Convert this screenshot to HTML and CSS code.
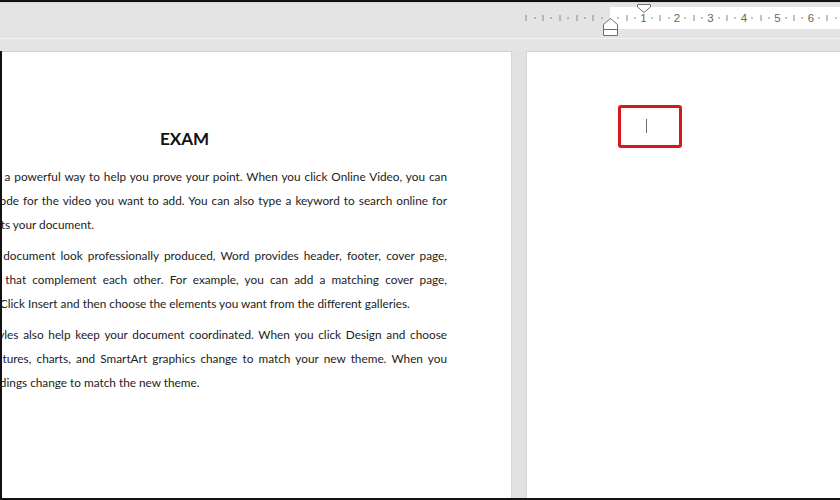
FILE: index.html
```html
<!DOCTYPE html>
<html lang="en">
<head>
  <meta charset="UTF-8">
  <meta name="viewport" content="width=device-width, initial-scale=1.0">
  <title>Document1 - Word</title>
  <link rel="stylesheet" href="styles.css">
</head>
<body>
  <div class="window">
    <!-- ruler strip above the pages -->
    <div class="topbar">
      <svg class="ruler" width="320" height="36" viewBox="520 2 320 36">
        <rect x="610" y="7" width="230" height="22" fill="#fff"/>
        <g id="ticks" fill="#8a8a8a"></g>
        <g class="ruler-num" font-size="11.5" fill="#666" text-anchor="middle">
          <text x="643.5" y="22">1</text>
          <text x="677" y="22">2</text>
          <text x="710.5" y="22">3</text>
          <text x="744" y="22">4</text>
          <text x="777.5" y="22">5</text>
          <text x="811" y="22">6</text>
        </g>
        <!-- first line indent -->
        <path d="M637.5 4.5 H650.5 V7 L644 12.5 L637.5 7 Z" fill="#fff" stroke="#6e6e6e"/>
        <!-- hanging / left indent -->
        <path d="M610.5 18.5 L617.5 24.5 V35.5 H603.5 V24.5 Z" fill="#fff" stroke="#6e6e6e"/>
        <path d="M603.5 29.5 H617.5" stroke="#6e6e6e"/>
      </svg>
      <div class="band"></div>
    </div>

    <div class="workspace">
      <div class="page page-one">
        <div class="text">
          <h1>EXAM</h1>
          <div class="para">
            <span class="ln">n a powerful way to help you prove your point. When you click Online Video, you can</span>
            <span class="ln">code for the video you want to add. You can also type a keyword to search online for</span>
            <span class="ln end">fits your document.</span>
          </div>
          <div class="para">
            <span class="ln">r document look professionally produced, Word provides header, footer, cover page,</span>
            <span class="ln">s that complement each other. For example, you can add a matching cover page,</span>
            <span class="ln end">. Click Insert and then choose the elements you want from the different galleries.</span>
          </div>
          <div class="para">
            <span class="ln">tyles also help keep your document coordinated. When you click Design and choose</span>
            <span class="ln">ictures, charts, and SmartArt graphics change to match your new theme. When you</span>
            <span class="ln end">adings change to match the new theme.</span>
          </div>
        </div>
      </div>
      <div class="page-gap"></div>
      <div class="page page-two">
        <div class="caret-box">
          <div class="caret"></div>
        </div>
      </div>
    </div>
  </div>

  <script>
    // quarter-centimetre marks on the ruler, 0 sits on the left margin
    const ticks = document.getElementById("ticks");
    const cm = 33.45;
    const origin = 610;
    for (let q = -11; q <= 27; q++) {
      if (q === 0) continue;
      if (q > 0 && q % 4 === 0) continue; // numbered
      const x = origin + (q / 4) * cm;
      const r = document.createElementNS("http://www.w3.org/2000/svg", "rect");
      const tall = Math.abs(q) % 2 === 0;
      r.setAttribute("x", (Math.round(x) - 0.5).toString());
      r.setAttribute("width", "1");
      r.setAttribute("y", tall ? "15" : "17");
      r.setAttribute("height", tall ? "6" : "2");
      ticks.appendChild(r);
    }
  </script>
</body>
</html>
```

FILE: styles.css
```css
* {
  box-sizing: border-box;
}

body {
  margin: 0;
  background: #fff;
  font-family: "Lato", "Liberation Sans", sans-serif;
}

.window {
  width: 840px;
  height: 500px;
  border-top: 2px solid #121212;
  border-bottom: 2px solid #121212;
  display: flex;
  flex-direction: column;
  overflow: hidden;
}

/* ruler area */
.topbar {
  height: 49px;
  background: #e4e4e4;
  border-top: 1px solid #d9d9d9;
  flex-shrink: 0;
}

.ruler {
  display: block;
  margin-left: 520px;
  margin-top: -1px;
}

.ruler-num {
  font-family: "Liberation Sans", sans-serif;
}

.band {
  height: 0;
  border-top: 1px solid #f1f1f1;
}

/* pages */
.workspace {
  flex: 1;
  display: flex;
  border-left: 2px solid #111;
  background: #e2e2e2;
}

.page {
  background: #fff;
  border-top: 1px solid #cfcfcf;
  overflow: hidden;
}

.page-one {
  width: 509px;
  padding-top: 75px;
}

.page-gap {
  width: 16px;
  background: #e1e1e1;
  border-left: 1px solid #d6d6d6;
  border-right: 1px solid #d6d6d6;
}

.page-two {
  flex: 1;
  padding-top: 53px;
  padding-left: 91px;
}

.text {
  margin-left: -80px;
  width: 525px;
  color: #222;
  font-size: 11.8px;
}

h1 {
  margin: 0 0 14px;
  font-size: 17px;
  line-height: 24px;
  font-weight: bold;
  text-align: center;
  color: #111;
}

.para {
  margin-bottom: 7px;
}

.ln {
  display: block;
  margin-left: 72px;
  line-height: 24px;
  height: 24px;
  text-align: justify;
  text-align-last: justify;
}

.ln.end {
  text-align-last: left;
}

/* selected empty paragraph on the second page */
.caret-box {
  width: 64px;
  height: 43px;
  border: 3px solid #d8171d;
  border-radius: 3px;
  padding: 11px 0 0 25px;
}

.caret {
  width: 1px;
  height: 14px;
  background: #6f6f6f;
}
```
